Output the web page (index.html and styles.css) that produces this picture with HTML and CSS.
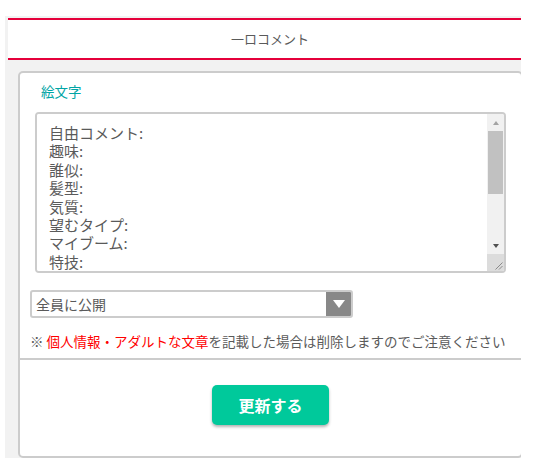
FILE: index.html
```html
<!DOCTYPE html>
<html lang="ja">
<head>
<meta charset="utf-8">
<title>一ロコメント</title>
<link rel="stylesheet" href="styles.css">
</head>
<body>
<div class="panel">
  <div class="header">一ロコメント</div>
  <div class="card">
    <div class="card-body">
      <div class="label">絵文字</div>
      <div class="ta-box">
        <textarea class="ta-input" readonly>自由コメント:
趣味:
誰似:
髪型:
気質:
望むタイプ:
マイブーム:
特技:
</textarea>
        <div class="scrollbar">
          <div class="sb-btn"><span class="tri-up"></span></div>
          <div class="sb-track"><div class="sb-thumb"></div></div>
          <div class="sb-btn"><span class="tri-down"></span></div>
          <div class="sb-corner">
            <svg width="17" height="17" viewBox="0 0 17 17"><path d="M15.5 8.5 L8.5 15.5 M15.5 12 L12 15.5" stroke="#8a8a8a" stroke-width="1" fill="none"/></svg>
          </div>
        </div>
      </div>
      <div class="select-box">
        <select class="select-input">
          <option>全員に公開</option>
        </select>
        <div class="select-arrow"><span class="tri-white"></span></div>
      </div>
      <p class="notice">※ <span class="red">個人情報・アダルトな文章</span>を記載した場合は削除しますのでご注意ください</p>
    </div>
    <div class="card-footer">
      <button class="btn" type="button">更新する</button>
    </div>
  </div>
</div>
</body>
</html>
```

FILE: styles.css
```css
html, body {
  margin: 0;
  padding: 0;
  background: #ffffff;
}

body {
  font-family: "Noto Sans CJK JP", "Noto Sans", sans-serif;
  color: #5a5a5a;
}

.panel {
  margin: 16px 0 0 5px;
  width: 516px;
  padding: 2px 0 0 0;
  background: #f2f2f2;
  overflow: hidden;
}

.header {
  margin-left: 3px;
  width: 524px;
  border-top: 2px solid #e5003b;
  border-bottom: 2px solid #e5003b;
  background: #ffffff;
  height: 38px;
  line-height: 38px;
  font-size: 13px;
  text-align: center;
  color: #5a5a5a;
}

.card {
  margin: 11px 0 0 13px;
  width: 501px;
  border: 2px solid #cccccc;
  border-radius: 5px;
  background: #ffffff;
}

.card-body {
  padding: 8px 10px 7px 10px;
}

.label {
  padding-left: 11px;
  font-size: 13.5px;
  line-height: 20px;
  color: #00a5a5;
  margin-bottom: 11px;
}

.ta-box {
  margin-left: 5px;
  width: 467px;
  height: 157px;
  border: 2px solid #cccccc;
  border-radius: 4px;
  display: flex;
  overflow: hidden;
  background: #ffffff;
}

.ta-input {
  flex: 1;
  border: none;
  outline: none;
  resize: none;
  overflow: hidden;
  margin: 0;
  padding: 10px 11px 0 12px;
  font-family: "Noto Sans CJK JP", "Noto Sans", sans-serif;
  font-size: 15px;
  line-height: 18.4px;
  color: #5a5a5a;
  background: #ffffff;
}

.scrollbar {
  width: 17px;
  display: flex;
  flex-direction: column;
  background: #f1f1f1;
}

.sb-btn {
  height: 17px;
  display: flex;
  align-items: center;
  justify-content: center;
}

.tri-up {
  width: 0;
  height: 0;
  border-left: 3.5px solid transparent;
  border-right: 3.5px solid transparent;
  border-bottom: 4px solid #a3a3a3;
}

.tri-down {
  width: 0;
  height: 0;
  border-left: 3.5px solid transparent;
  border-right: 3.5px solid transparent;
  border-top: 4px solid #505050;
}

.sb-track {
  flex: 1;
  padding: 0 1px;
}

.sb-thumb {
  height: 63px;
  background: #c1c1c1;
}

.sb-corner {
  height: 17px;
  background: #dcdcdc;
  display: flex;
}

.select-box {
  margin-top: 17px;
  width: 319px;
  height: 24px;
  border: 2px solid #cccccc;
  border-radius: 3px;
  display: flex;
  overflow: hidden;
  background: #ffffff;
}

.select-input {
  flex: 1;
  appearance: none;
  -webkit-appearance: none;
  border: none;
  outline: none;
  background: transparent;
  margin: 0;
  padding: 0 0 0 4px;
  font-family: "Noto Sans CJK JP", "Noto Sans", sans-serif;
  font-size: 14px;
  color: #5a5a5a;
}

.select-arrow {
  width: 25px;
  background: #888888;
  display: flex;
  align-items: center;
  justify-content: center;
}

.tri-white {
  width: 0;
  height: 0;
  border-left: 6px solid transparent;
  border-right: 6px solid transparent;
  border-top: 8px solid #ffffff;
}

.notice {
  margin: 13px 0 0 0;
  font-size: 13.5px;
  line-height: 20px;
  color: #5a5a5a;
  white-space: nowrap;
}

.red {
  color: #ff0000;
}

.card-footer {
  border-top: 2px solid #cccccc;
  padding: 25px 0 31px 0;
  text-align: center;
}

.btn {
  width: 117px;
  height: 40px;
  border: none;
  border-radius: 5px;
  background: #00c99b;
  color: #ffffff;
  font-family: "Noto Sans CJK JP", "Noto Sans", sans-serif;
  font-size: 16px;
  font-weight: bold;
  box-shadow: 0 2px 3px rgba(0, 0, 0, 0.3);
  cursor: pointer;
  padding: 0;
}
```
